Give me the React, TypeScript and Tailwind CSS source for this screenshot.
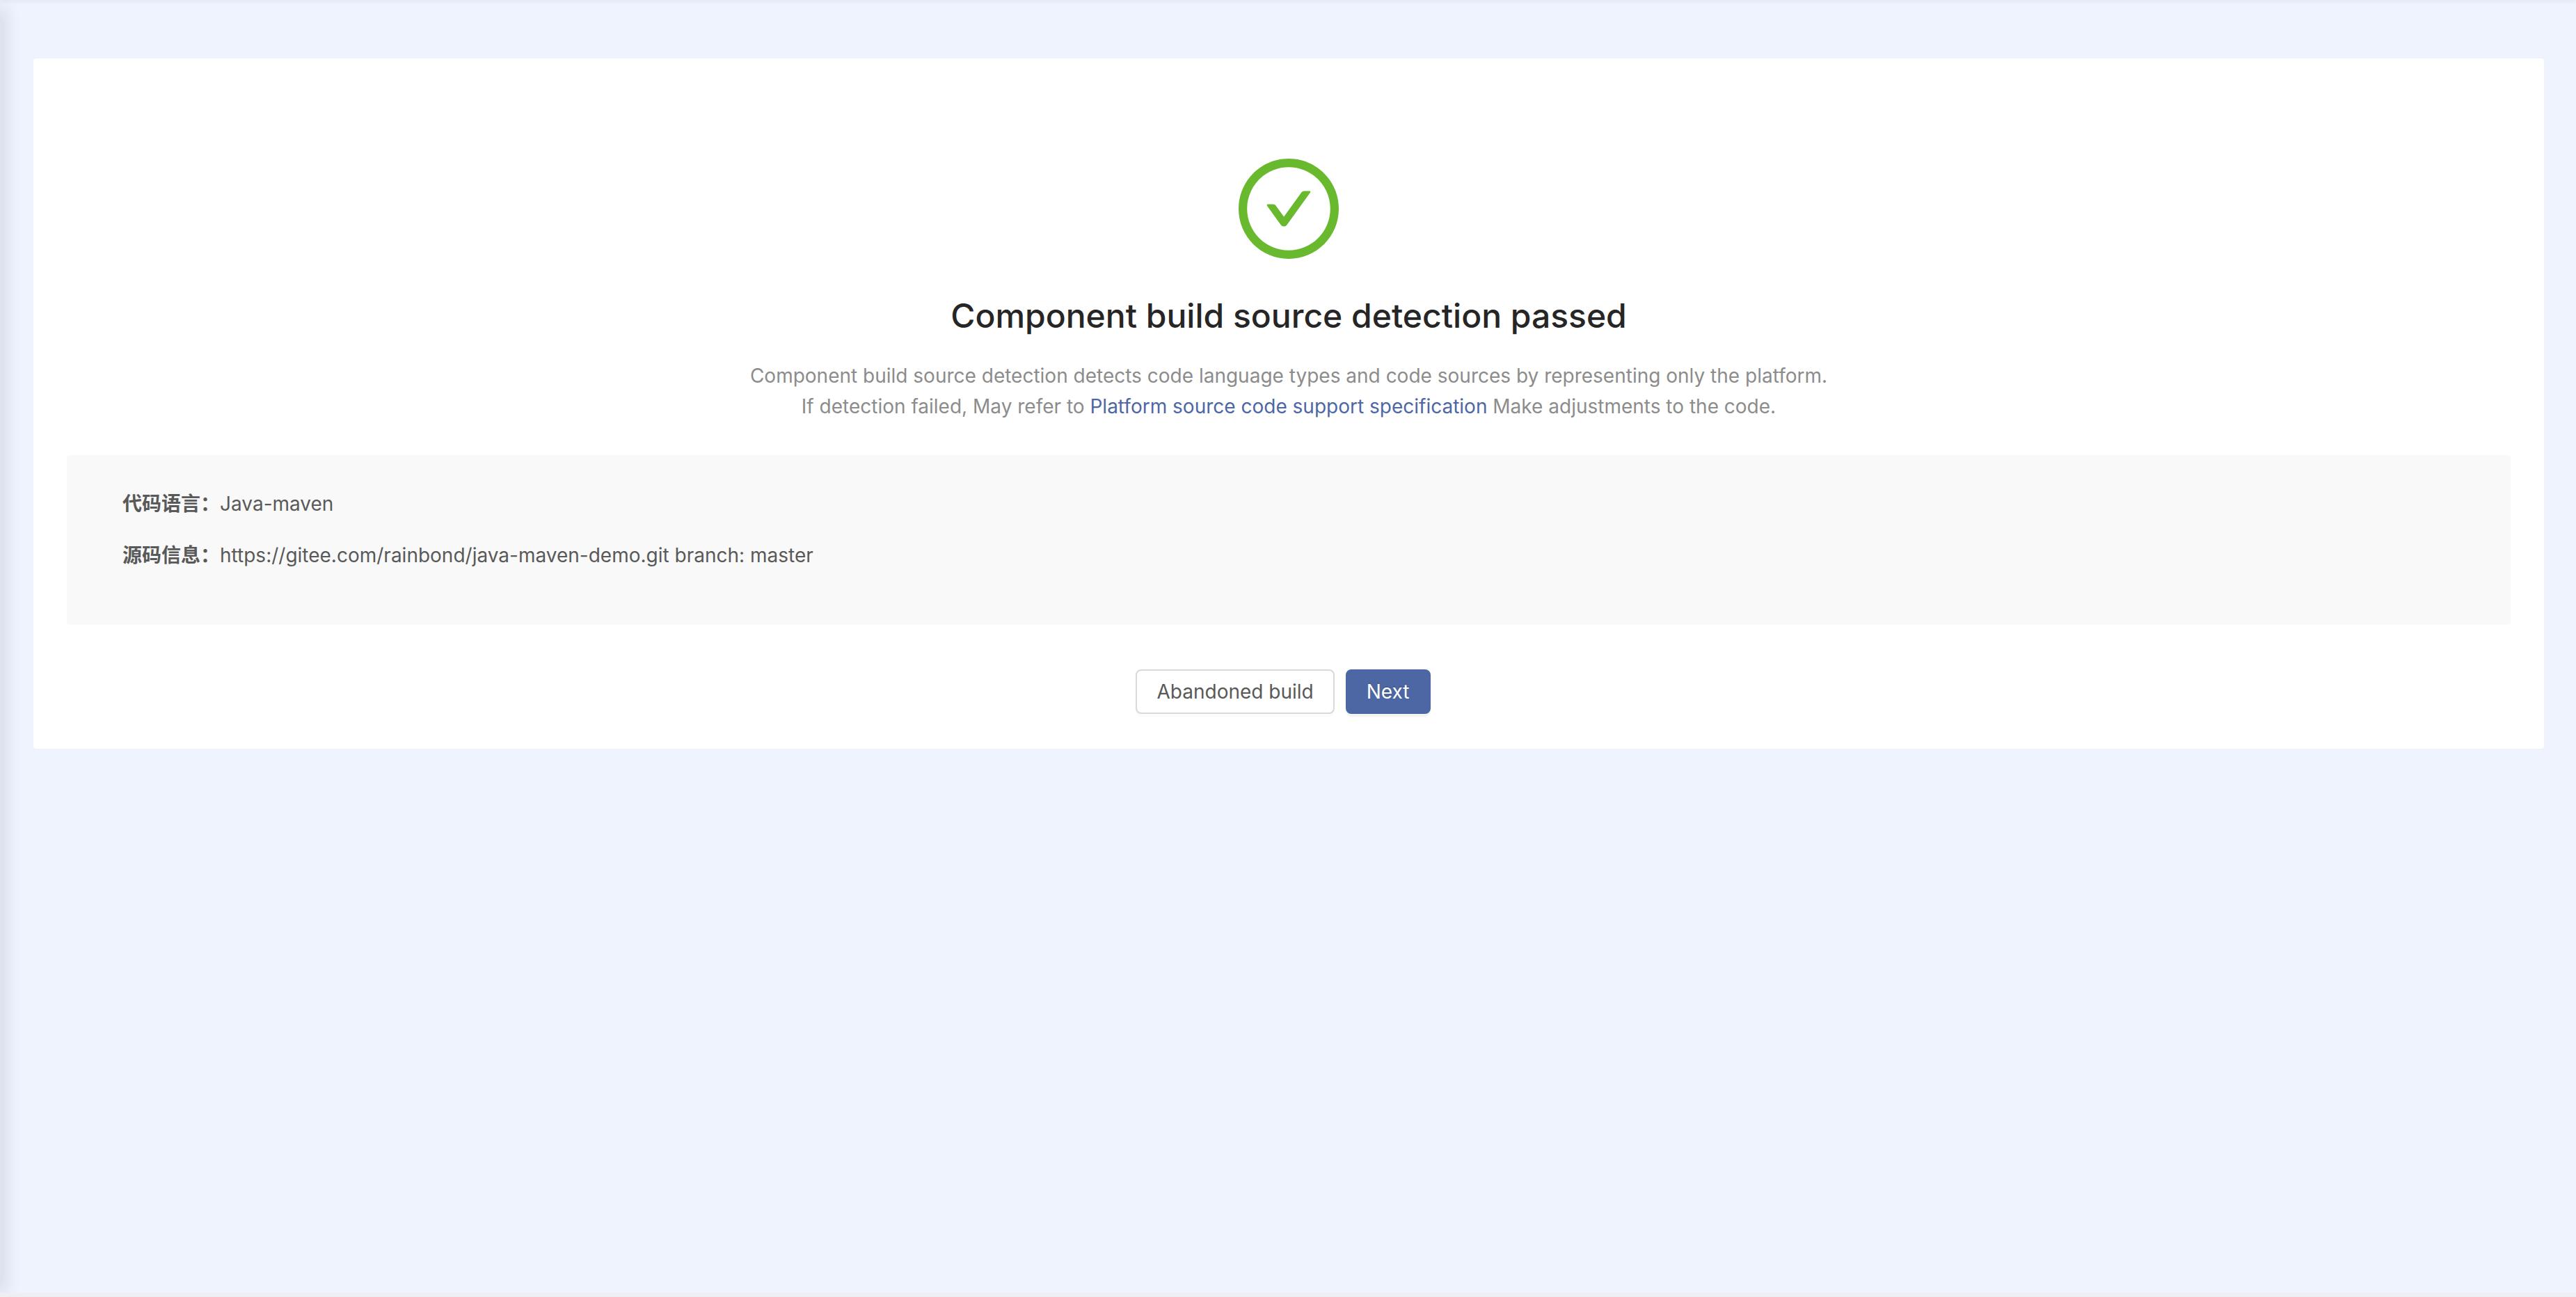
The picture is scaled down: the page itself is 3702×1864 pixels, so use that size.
const details = [
  { label: '代码语言：', value: 'Java-maven' },
  { label: '源码信息：', value: 'https://gitee.com/rainbond/java-maven-demo.git branch: master' },
];

function SuccessIcon() {
  return (
    <svg className="h-36 w-36 fill-[#68b92e]" viewBox="64 64 896 896" aria-hidden="true">
      <path d="M699 353h-46.9c-10.2 0-19.9 4.9-25.9 13.3L469 584.3l-71.2-98.8c-6-8.3-15.6-13.3-25.9-13.3H325c-6.5 0-10.3 7.4-6.5 12.7l124.6 172.8a31.8 31.8 0 0 0 51.7 0l210.6-292c3.9-5.3.1-12.7-6.4-12.7z" />
      <path d="M512 64C264.6 64 64 264.6 64 512s200.6 448 448 448 448-200.6 448-448S759.4 64 512 64zm0 820c-205.4 0-372-166.6-372-372s166.6-372 372-372 372 166.6 372 372-166.6 372-372 372z" />
    </svg>
  );
}

export default function App() {
  return (
    <div className="relative min-h-screen overflow-hidden border-b-6 border-[#eeeff3] bg-[#eef3fe] px-12 py-21 font-[Inter,'Noto_Sans_CJK_SC',sans-serif] text-[28px] leading-11 text-[#595959]">
      <div className="pointer-events-none absolute -left-3 top-3 bottom-0 w-3 shadow-[4px_0_24px_rgba(29,35,61,0.22)]" />
      <div className="pointer-events-none absolute inset-x-0 -top-2 h-2 shadow-[0_2px_6px_rgba(29,35,61,0.06)]" />
      <main className="mr-[-2px] rounded-sm bg-white px-12 pt-36 pb-[50px]">
        <section className="flex flex-col items-center text-center">
          <SuccessIcon />
          <h1 className="mt-[50px] text-[48px] leading-16 font-medium text-[#262626]">
            Component build source detection passed
          </h1>
          <p className="mt-8 text-[#8c8c8c]">
            Component build source detection detects code language types and code sources by
            representing only the platform.
            <br />
            If detection failed, May refer to{' '}
            <a href="#specification" className="text-[#4d67a5]">
              Platform source code support specification
            </a>{' '}
            Make adjustments to the code.
          </p>
        </section>
        <dl className="mt-12 flex flex-col gap-[30px] rounded-sm bg-[#f9f9f9] px-20 pt-12 pb-[78px]">
          {details.map((item) => (
            <div key={item.label} className="flex">
              <dt className="font-bold">{item.label}</dt>
              <dd>{item.value}</dd>
            </div>
          ))}
        </dl>
        <div className="mt-16 mr-4 flex justify-center gap-4">
          <button
            type="button"
            className="h-16 rounded-lg border-2 border-[#d9d9d9] bg-white px-7 shadow-[0_4px_0_rgba(0,0,0,0.015)]"
          >
            Abandoned build
          </button>
          <button
            type="button"
            className="h-16 rounded-lg border-2 border-[#4d67a5] bg-[#4d67a5] px-7 text-white shadow-[0_4px_0_rgba(0,0,0,0.045)] text-shadow-[0_-2px_0_rgba(0,0,0,0.12)]"
          >
            Next
          </button>
        </div>
      </main>
    </div>
  );
}
